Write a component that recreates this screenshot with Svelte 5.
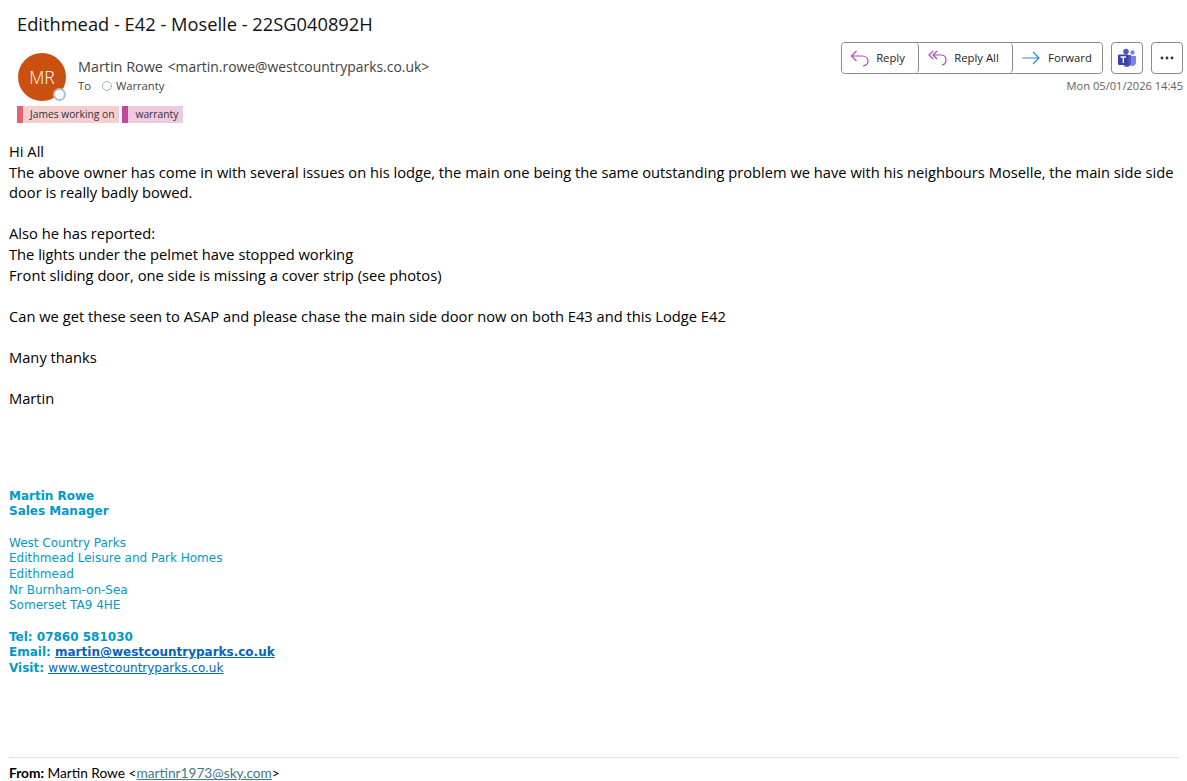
<script lang="ts">
    // the body of the mail, one entry per paragraph
    const paragraphs = [
        ["Hi All", "The above owner has come in with several issues on his lodge, the main one being the same outstanding problem we have with his neighbours Moselle, the main side side door is really badly bowed."],
        ["Also he has reported:", "The lights under the pelmet have stopped working", "Front sliding door, one side is missing a cover strip (see photos)"],
        ["Can we get these seen to ASAP and please chase the main side door now on both E43 and this Lodge E42"],
        ["Many thanks"],
        ["Martin"]
    ];

    const address = ["West Country Parks", "Edithmead Leisure and Park Homes", "Edithmead", "Nr Burnham-on-Sea", "Somerset TA9 4HE"];
</script>

<div class="page">
    <h1 class="subject">Edithmead - E42 - Moselle - 22SG040892H</h1>

    <header class="header">
        <div class="sender">
            <div class="avatar">MR<span class="presence"></span></div>
            <div class="who">
                <div class="from-line">Martin Rowe <span class="addr">&lt;martin.rowe@westcountryparks.co.uk&gt;</span></div>
                <div class="to-line">
                    <span class="to">To</span>
                    <span class="dot"></span>
                    <span>Warranty</span>
                </div>
            </div>
        </div>

        <div class="actions">
            <div class="buttons">
                <div class="group">
                    <button class="btn reply">
                        <svg width="20" height="20" viewBox="0 0 20 20" fill="none" stroke="#b146c2" stroke-width="1.2">
                            <path d="M6.5 3 L1.5 8 L6.5 13 M1.5 8 H12 C16 8 18 10.5 18 13 C18 15.5 16 17.5 13 18" />
                        </svg>
                        <span>Reply</span>
                    </button>
                    <button class="btn replyall">
                        <svg width="20" height="20" viewBox="0 0 20 20" fill="none" stroke="#b146c2" stroke-width="1.2">
                            <path d="M5 3 L1 7 L5 11 M9 3 L5 7 L9 11 M5 7 H13 C16.5 7 18 9.5 18 12 C18 14.5 16.5 16.5 14 17" />
                        </svg>
                        <span>Reply All</span>
                    </button>
                    <button class="btn forward">
                        <svg width="20" height="20" viewBox="0 0 20 20" fill="none" stroke="#2b88c8" stroke-width="1.2">
                            <path d="M1.5 10 H17.5 M12 4 L18 10 L12 16" />
                        </svg>
                        <span>Forward</span>
                    </button>
                </div>
                <button class="btn square">
                    <svg width="20" height="20" viewBox="0 0 20 20">
                        <circle cx="15.5" cy="4.5" r="2.2" fill="#7b83eb" />
                        <path d="M12 8 H19 V14 C19 16.5 17.5 18 15.5 18 C13.5 18 12 16.5 12 14 Z" fill="#7b83eb" />
                        <circle cx="9" cy="3.6" r="2.8" fill="#5059c9" />
                        <path d="M6 7 H14 V15 C14 17.5 12 19 10 19 C8 19 6 17.5 6 15 Z" fill="#5059c9" />
                        <rect x="1" y="6.5" width="10.5" height="10.5" rx="1" fill="#3e3fa8" />
                        <path d="M3.5 9 H9 M6.25 9 V15" stroke="#fff" stroke-width="1.3" fill="none" />
                    </svg>
                </button>
                <button class="btn square">
                    <svg width="14" height="4" viewBox="0 0 14 4" fill="#333">
                        <circle cx="2" cy="2" r="1.4" />
                        <circle cx="7" cy="2" r="1.4" />
                        <circle cx="12" cy="2" r="1.4" />
                    </svg>
                </button>
            </div>
            <div class="date">Mon 05/01/2026 14:45</div>
        </div>
    </header>

    <div class="tags">
        <span class="tag red">James working on</span>
        <span class="tag pink">warranty</span>
    </div>

    <main class="body">
        {#each paragraphs as lines}
            <div class="para">
                {#each lines as line}
                    <div>{line}</div>
                {/each}
            </div>
        {/each}
    </main>

    <section class="signature">
        <div class="para strong">
            <div>Martin Rowe</div>
            <div>Sales Manager</div>
        </div>
        <div class="para">
            {#each address as line}
                <div>{line}</div>
            {/each}
        </div>
        <div class="strong">
            <div>Tel: 07860 581030</div>
            <div>Email: <a class="link" href="#top">martin@westcountryparks.co.uk</a></div>
            <div>Visit: <a class="link plain" href="#top">www.westcountryparks.co.uk</a></div>
        </div>
    </section>

    <footer class="quoted">
        <b>From:</b> Martin Rowe &lt;<a href="#top">martinr1973@sky.com</a>&gt;
    </footer>
</div>

<style>
    :global(body)
    {
        margin: 0;
        background: #fff;
        overflow: hidden;
    }

    .page
    {
        box-sizing: border-box;
        width: 1187px;
        height: 781px;
        overflow: hidden;
        font-family: "Open Sans", "Noto Sans", sans-serif;
        color: #000;
    }

    .subject
    {
        margin: 0;
        padding: 11px 0 0 17px;
        font-size: 18.3px;
        line-height: 26px;
        font-weight: 400;
        color: #111;
    }

    .header
    {
        display: flex;
        justify-content: space-between;
        align-items: flex-start;
        padding: 5px 4px 0 18px;
    }

    .sender
    {
        display: flex;
        gap: 12px;
        padding-top: 11px;
    }

    .avatar
    {
        position: relative;
        width: 48px;
        height: 48px;
        border-radius: 50%;
        background: #ca5010;
        color: #fff;
        font-size: 17.5px;
        font-weight: 300;
        line-height: 48px;
        text-align: center;
    }

    .presence
    {
        position: absolute;
        right: 0;
        bottom: 0;
        box-sizing: border-box;
        width: 13px;
        height: 13px;
        border-radius: 50%;
        background: #fff;
        border: 2px solid #a9c4d4;
    }

    .who
    {
        color: #424242;
    }

    .from-line
    {
        font-size: 14.4px;
        line-height: 20px;
        margin-top: 4px;
    }

    .addr
    {
        font-size: 13.9px;
        margin-left: 1px;
    }

    .to-line
    {
        display: flex;
        align-items: center;
        font-size: 11.2px;
        line-height: 18px;
    }

    .to
    {
        margin-right: 11px;
    }

    .dot
    {
        box-sizing: border-box;
        width: 10px;
        height: 10px;
        border-radius: 50%;
        border: 1px solid #a0b4c2;
        margin-right: 4px;
    }

    .actions
    {
        display: flex;
        flex-direction: column;
        align-items: flex-end;
    }

    .buttons
    {
        display: flex;
        gap: 8px;
    }

    .group
    {
        display: flex;
        border: 1px solid #8a8a8a;
        border-radius: 4px;
        height: 32px;
        box-sizing: border-box;
    }

    .btn
    {
        display: flex;
        align-items: center;
        justify-content: center;
        gap: 6px;
        background: #fff;
        border: none;
        padding: 0;
        font-family: inherit;
        font-size: 11.3px;
        color: #242424;
    }

    .btn span
    {
        margin-bottom: 2px;
    }

    .group .btn
    {
        border-radius: 4px;
    }

    .reply
    {
        width: 77px;
        padding-right: 5px;
        border-right: 1px solid #8a8a8a !important;
        border-radius: 4px 0 0 4px;
    }

    .replyall
    {
        width: 94px;
        padding-right: 4px;
        border-right: 1px solid #8a8a8a !important;
    }

    .forward
    {
        width: 89px;
        padding-right: 2px;
        gap: 7px;
    }

    .square
    {
        box-sizing: border-box;
        width: 32px;
        height: 32px;
        border: 1px solid #8a8a8a;
        border-radius: 4px;
    }

    .date
    {
        margin-top: 4px;
        font-size: 11.1px;
        line-height: 16px;
        color: #616161;
    }

    .tags
    {
        display: flex;
        gap: 3px;
        padding: 0 0 0 17px;
        margin-top: 5px;
    }

    .tag
    {
        box-sizing: border-box;
        height: 17px;
        line-height: 17px;
        font-size: 10.25px;
        color: #333;
        padding: 0 5px 0 7px;
        border-left: 6px solid;
    }

    .red
    {
        background: #f4ced1;
        border-left-color: #e3626f;
    }

    .pink
    {
        background: #edc9e2;
        border-left-color: #c4489a;
    }

    .body
    {
        padding: 18px 8px 0 9px;
        font-size: 14.7px;
        line-height: 20.6px;
    }

    .body .para
    {
        margin-bottom: 20.6px;
    }

    .signature
    {
        padding: 59.5px 0 0 9px;
        font-family: "DejaVu Sans", Verdana, sans-serif;
        font-size: 12px;
        line-height: 15.65px;
        color: #0099cc;
    }

    .signature .para
    {
        margin-bottom: 15.65px;
    }

    .strong
    {
        font-weight: 700;
    }

    .link
    {
        color: #0563c1;
        text-decoration: underline;
    }

    .plain
    {
        font-weight: 400;
    }

    .quoted
    {
        margin: 80.5px 8px 0 9px;
        padding-top: 7px;
        border-top: 1px solid #e1e1e1;
        font-family: Lato, "Liberation Sans", sans-serif;
        font-size: 13.7px;
        line-height: 16px;
        color: #000;
    }

    .quoted a
    {
        color: #467886;
        text-decoration: underline;
    }
</style>
